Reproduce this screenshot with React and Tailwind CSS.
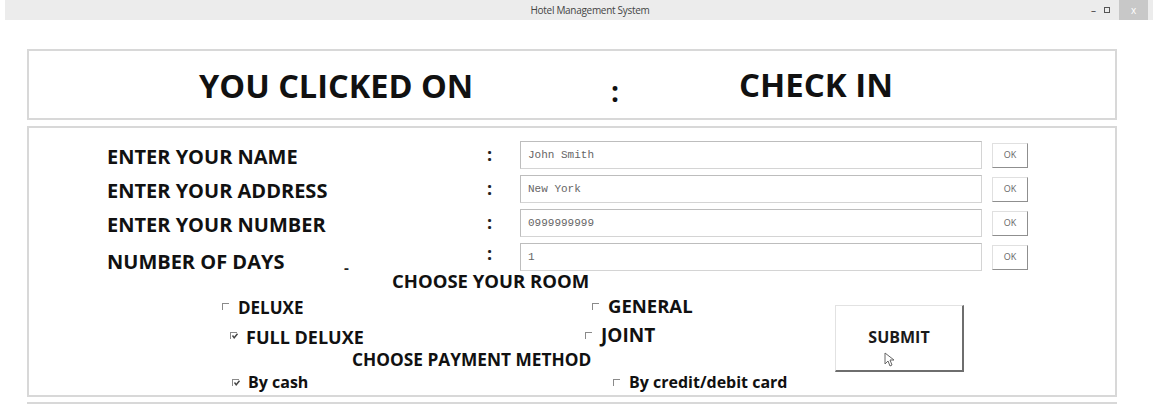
import React from 'react';

const font = { fontFamily: '"Open Sans", "Noto Sans", sans-serif' };

const Box = ({ checked }) => (
  <span className="relative inline-block w-[7px] h-[7px] border-t border-l border-[#8a8a8a] shrink-0">
    {checked && (
      <svg className="absolute left-[0px] top-[0px] overflow-visible" width="7" height="7" viewBox="0 0 7 7">
        <path d="M1.5 2.5 L3.2 4.8 L6.5 0.8" fill="none" stroke="#444" strokeWidth="1.4" />
      </svg>
    )}
  </span>
);

const Choice = ({ label, checked, pad, size }) => (
  <div className={`flex items-center gap-[9px] ${pad}`}>
    <Box checked={checked} />
    <span className={`font-bold text-[#111] ${size}`}>{label}</span>
  </div>
);

const fields = [
  { label: 'ENTER YOUR NAME', value: 'John Smith' },
  { label: 'ENTER YOUR ADDRESS', value: 'New York' },
  { label: 'ENTER YOUR NUMBER', value: '0999999999' },
  { label: 'NUMBER OF DAYS', value: '1', dash: true },
];

export default function App() {
  return (
    <div className="w-[1158px] h-[404px] bg-white overflow-hidden" style={font}>
      {/* window title bar */}
      <div className="relative mx-[5px] h-[20px] bg-[#ececec] flex items-center justify-center pl-[22px]">
        <span className="text-[10px] text-[#444] tracking-[-0.3px]">Hotel Management System</span>
        <div className="absolute right-[5px] top-0 h-[20px] flex items-center">
          <span className="text-[10px] text-[#444] mr-[8px]">–</span>
          <span className="inline-block w-[6px] h-[6px] border border-[#555] mr-[9px]" />
          <span className="w-[29px] h-[20px] bg-[#c8c8c8] text-white text-[10px] flex items-center justify-center">x</span>
        </div>
      </div>

      {/* clicked panel */}
      <div className="ml-[27px] mt-[29px] w-[1090px] h-[71px] border-2 border-[#d8d8d8] flex items-center">
        <span className="ml-[170px] w-[412px] text-[32.5px] font-bold text-[#111] pt-[4px]">YOU CLICKED ON</span>
        <span className="w-[128px] text-[28px] font-bold text-[#111] pt-[12px]">:</span>
        <span className="text-[33px] font-bold text-[#111]">CHECK IN</span>
      </div>

      {/* form panel */}
      <div className="ml-[27px] mt-[6px] w-[1090px] h-[271px] border-2 border-[#d8d8d8]">
        <div className="flex flex-col gap-[6px] pt-[13px]">
          {fields.map((f, i) => (
            <div key={f.label} className="flex items-center h-[28px]">
              <span className={`ml-[78px] w-[237px] text-[20px] font-bold text-[#111] whitespace-nowrap ${i === 3 ? 'pt-[10px]' : 'pt-[3px]'}`}>
                {f.label}
              </span>
              <span className="w-[143px] text-[15px] font-bold text-[#222] pt-[20px]">{f.dash ? '-' : ''}</span>
              <span className={`w-[33px] text-[18px] font-bold text-[#222] ${i === 3 ? 'pb-[8px]' : 'pb-[2px]'}`}>:</span>
              <div className="w-[462px] h-[28px] border border-[#d4d4d4] border-t-[#bdbdbd] border-l-[#bdbdbd] flex items-center pl-[7px]">
                <span className="text-[11px] text-[#666]" style={{ fontFamily: '"Liberation Mono", monospace' }}>{f.value}</span>
              </div>
              <div className="ml-[10px] w-[36px] h-[25px] border border-[#e0e0e0] border-r-[#8f8f8f] border-b-[#8f8f8f] flex items-center justify-center">
                <span className="text-[9px] text-[#666]">OK</span>
              </div>
            </div>
          ))}
        </div>

        <div className="flex">
          <div className="w-[806px] flex flex-col">
            <div className="h-[22px] flex items-end pl-[363px]">
              <span className="text-[18.5px] font-bold text-[#111] leading-[24px]">CHOOSE YOUR ROOM</span>
            </div>
            <div className="h-[26px] flex items-center">
              <Choice label="DELUXE" pad="pl-[193px] w-[563px]" size="text-[17px] pt-[4px]" />
              <Choice label="GENERAL" pad="" size="text-[18.5px]" />
            </div>
            <div className="h-[32px] flex items-center">
              <Choice label="FULL DELUXE" checked pad="pl-[201px] w-[556px]" size="text-[18px] pt-[4px]" />
              <Choice label="JOINT" pad="" size="text-[19px]" />
            </div>
            <div className="h-[18px] flex items-center pl-[323px]">
              <span className="text-[17.3px] font-bold text-[#111]">CHOOSE PAYMENT METHOD</span>
            </div>
            <div className="h-[26px] flex items-center">
              <Choice label="By cash" checked pad="pl-[203px] w-[584px]" size="text-[16px]" />
              <Choice label="By credit/debit card" pad="" size="text-[16px]" />
            </div>
          </div>
          <div className="relative mt-[34px] w-[129px] h-[67px] border border-[#e2e2e2] border-r-2 border-b-2 border-r-[#6e6e6e] border-b-[#6e6e6e] flex items-center justify-center">
            <span className="text-[16px] font-bold text-[#1a1a1a] pb-[2px]">SUBMIT</span>
            <svg className="absolute left-[48px] top-[46px]" width="11" height="16" viewBox="0 0 11 16">
              <path d="M1 1 L1 12 L4 9 L6 14 L8 13 L6 8 L10 8 Z" fill="#fff" stroke="#666" strokeWidth="1" />
            </svg>
          </div>
        </div>
      </div>

      {/* next panel edge */}
      <div className="ml-[27px] mt-[5px] w-[1090px] h-[20px] border-2 border-[#d8d8d8]" />
    </div>
  );
}
